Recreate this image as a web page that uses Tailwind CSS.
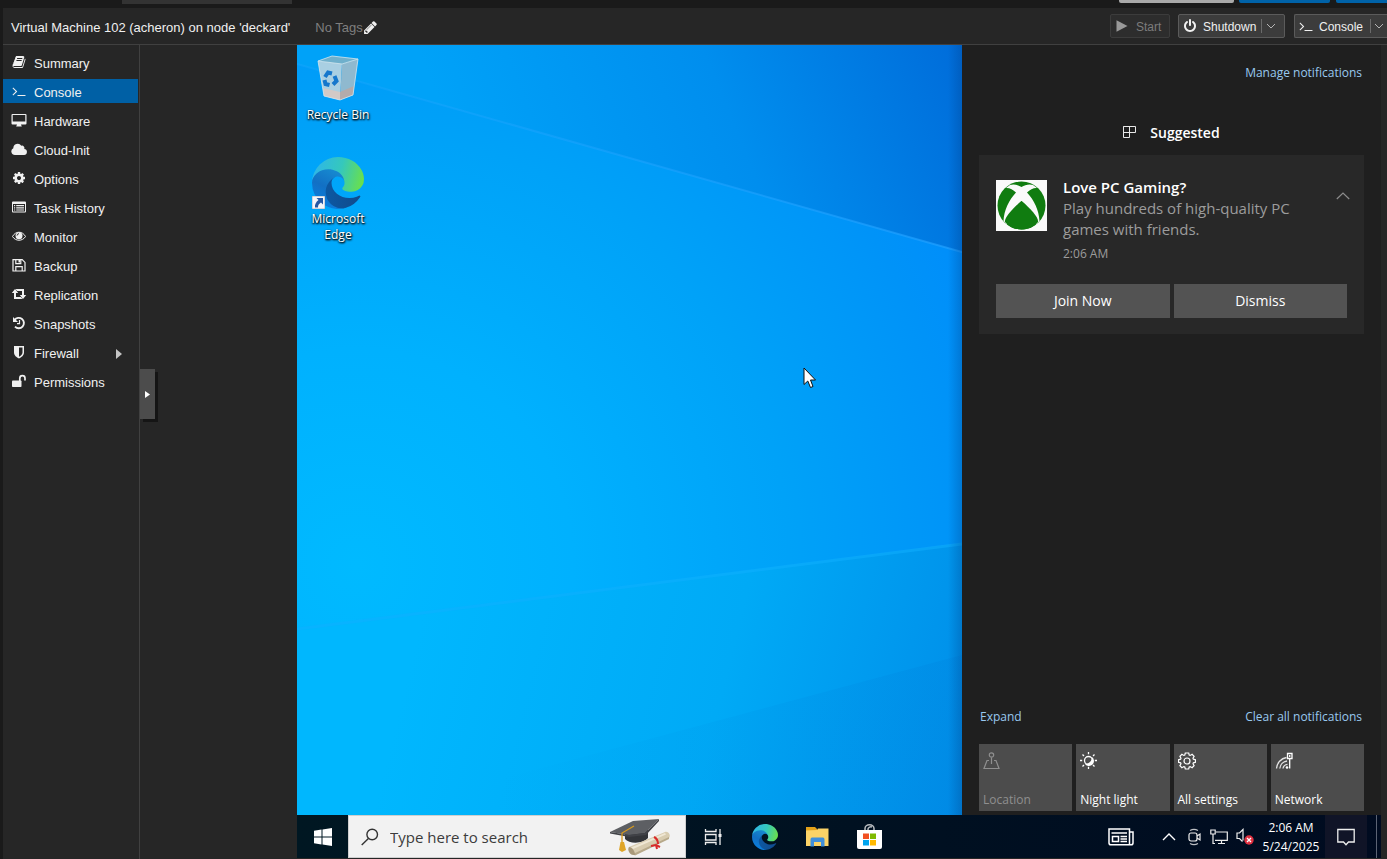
<!DOCTYPE html>
<html lang="en">
  <head>
    <meta charset="UTF-8" />
    <meta name="viewport" content="width=device-width, initial-scale=1.0" />
    <title>acheron - Virtual Environment</title>
    <script src="https://cdn.jsdelivr.net/npm/@tailwindcss/browser@4"></script>
  </head>

  <body
    class="flex h-screen flex-col overflow-hidden bg-[#1a1a1a] font-['Liberation_Sans',Arial,sans-serif] text-[13px] text-[#f0f0f0]"
  >
    <!-- Shared logo -->
    <svg class="absolute size-0" aria-hidden="true">
      <defs>
        <linearGradient id="edgeDark" x1="60" y1="177" x2="240" y2="177" gradientUnits="userSpaceOnUse">
          <stop offset="0" stop-color="#0c59a4" />
          <stop offset="1" stop-color="#114a8b" />
        </linearGradient>
        <linearGradient id="edgeMid" x1="120" y1="80" x2="45" y2="230" gradientUnits="userSpaceOnUse">
          <stop offset="0" stop-color="#1687cf" />
          <stop offset="0.5" stop-color="#1270c4" />
          <stop offset="1" stop-color="#0b7ddc" />
        </linearGradient>
        <linearGradient id="edgeTop" x1="20" y1="60" x2="250" y2="120" gradientUnits="userSpaceOnUse">
          <stop offset="0" stop-color="#2fb8e4" />
          <stop offset="0.5" stop-color="#35c8bc" />
          <stop offset="1" stop-color="#6ae04b" />
        </linearGradient>
        <symbol id="edge" viewBox="0 0 256 256">
          <path fill="url(#edgeDark)" d="M231.070 190.540a93.730 93.730 0 0 1-10.540 4.710 101.870 101.870 0 0 1-35.900 6.460c-47.320 0-88.540-32.550-88.540-74.320A31.480 31.480 0 0 1 112.520 100c-42.800 1.800-53.800 46.400-53.800 72.530 0 73.880 68.090 81.370 82.760 81.370 7.910 0 19.840-2.300 27-4.560l1.310-.44A128.340 128.340 0 0 0 236.370 197.620a4 4 0 0 0-5.300-7.080Z" />
          <path fill="url(#edgeMid)" d="M105.730 241.420A79.200 79.200 0 0 1 83 220.100 80.720 80.720 0 0 1 112.520 99.760c3.120-1.470 8.450-4.130 15.540-4A32.350 32.350 0 0 1 153.750 108.760a31.880 31.880 0 0 1 6.360 18.660c0-.21 24.460-79.600-80-79.600C36.200 47.820.11 89.490.11 126A130.190 130.190 0 0 0 12.110 182.030a128 128 0 0 0 156.380 67.110 75.550 75.550 0 0 1-62.780-8Z" />
          <path fill="url(#edgeTop)" d="M152.270 149.150c-.81 1.050-3.300 2.500-3.300 5.660 0 2.610 1.700 5.120 4.720 7.230 14.380 10 41.490 8.680 41.560 8.680a59.560 59.560 0 0 0 30.270-8.350A61.380 61.380 0 0 0 255.820 109.500c.26-22.410-8-37.310-11.340-43.910C223.290 24.140 177.550.29 127.800.29A128 128 0 0 0 0 126.490c.48-36.540 36.800-66.050 80-66.050 3.500 0 23.460.34 42 10.070 16.340 8.580 24.900 18.940 30.850 29.210 6.180 10.670 7.280 24.150 7.280 29.520S157.370 142.750 152.270 149.150Z" />
        </symbol>
        <symbol id="terminal" viewBox="0 0 1792 1792">
          <path fill="currentColor" d="M649 983l-466 466q-10 10-23 10t-23-10l-50-50q-10-10-10-23t10-23l393-393-393-393q-10-10-10-23t10-23l50-50q10-10 23-10t23 10l466 466q10 10 10 23t-10 23zm1079 457v64q0 14-9 23t-23 9h-960q-14 0-23-9t-9-23v-64q0-14 9-23t23-9h960q14 0 23 9t9 23z" />
        </symbol>
      </defs>
    </svg>

    <!-- Top edge of the page -->
    <div class="flex h-2 shrink-0 items-start">
      <div class="ml-[122px] h-1 w-[170px] bg-[#333]"></div>
      <div class="ml-auto h-[3px] w-[115px] rounded-b-xs bg-[#a9a9a9]"></div>
      <div class="ml-[5px] h-[3px] w-[91px] rounded-b-xs bg-[#0062a8]"></div>
      <div class="ml-[6px] h-[3px] w-[51px] rounded-bl-xs bg-[#0062a8]"></div>
    </div>

    <!-- VM toolbar -->
    <header class="ml-[3px] flex h-[37px] shrink-0 items-center border-b border-[#404040] bg-[#262626] pl-2">
      <h1 class="pt-[3px] whitespace-nowrap">Virtual Machine 102 (acheron) on node 'deckard'</h1>
      <div class="ml-[25px] flex items-center pt-[3px] text-[#7f7f7f]">
        <span>No Tags</span>
        <button class="text-[#f0f0f0]" aria-label="Edit tags">
          <svg class="size-[15px]" viewBox="0 0 1792 1792" fill="currentColor"><path d="M491 1536l91-91-235-235-91 91v107h128v128h107zm523-928q0-22-22-22-10 0-17 7l-542 542q-7 7-7 17 0 22 22 22 10 0 17-7l542-542q7-7 7-17zm-54-192l416 416-832 832h-416v-416zm683 96q0 53-37 90l-166 166-416-416 166-165q36-38 90-38 53 0 91 38l235 234q37 39 37 91z" /></svg>
        </button>
      </div>

      <div class="ml-auto flex text-xs">
        <button disabled class="flex h-6 w-[60px] items-center gap-2 rounded-xs border border-[#3c3c3c] bg-[#2d2d2d] pl-[5px] text-[#7c7c7c]">
          <svg class="size-3" viewBox="0 0 12 12" fill="#999"><path d="M0.500 0.300 11.500 6 0.500 11.700Z" /></svg>
          <span class="pt-px">Start</span>
        </button>
        <div class="ml-2 flex h-6 w-[107px] rounded-xs border border-[#5b5b5b] bg-[#3c3c3c]">
          <button class="flex items-center gap-[6px] pl-1">
            <svg class="size-[14px]" viewBox="0 0 1792 1792" fill="currentColor"><path d="M1664 896q0 156-61 298t-164 245-245 164-298 61-298-61-245-164-164-245-61-298q0-182 80.500-343t226.500-270q43-32 95.500-25t83.500 50q32 42 24.500 94.500t-49.500 84.500q-98 74-151.500 181t-53.500 228q0 104 40.500 198.500t109.500 163.500 163.500 109.500 198.500 40.500 198.500-40.500 163.500-109.500 109.500-163.500 40.500-198.500q0-121-53.500-228t-151.500-181q-42-32-49.500-84.500t24.500-94.500q31-43 84-50t95 25q146 109 226.500 270t80.500 343zm-640-768v640q0 52-38 90t-90 38-90-38-38-90v-640q0-52 38-90t90-38 90 38 38 90z" /></svg>
            <span class="pt-px">Shutdown</span>
          </button>
          <button class="my-1 mr-1 ml-auto flex w-[19px] items-center justify-center border-l border-[#6b6b6b]" aria-label="Shutdown options">
            <svg class="h-2 w-[10px]" viewBox="0 0 10 8" fill="none" stroke="#b5b5b5"><path d="M1 2l4 4 4-4" /></svg>
          </button>
        </div>
        <div class="ml-[9px] flex h-6 w-[93px] rounded-l-xs border-y border-l border-[#5b5b5b] bg-[#3c3c3c]">
          <button class="flex items-center gap-[6px] pl-1">
            <svg class="size-[14px]"><use href="#terminal" /></svg>
            <span class="pt-px">Console</span>
          </button>
          <button class="my-1 ml-auto flex w-[17px] items-center justify-center border-l border-[#6b6b6b]" aria-label="Console options">
            <svg class="h-2 w-[10px]" viewBox="0 0 10 8" fill="none" stroke="#b5b5b5"><path d="M1 2l4 4 4-4" /></svg>
          </button>
        </div>
      </div>
    </header>

    <div class="ml-[3px] flex min-h-0 flex-1 bg-[#262626]">
      <!-- Sidebar -->
      <nav class="flex w-[137px] shrink-0 flex-col gap-[5px] border-r border-[#404040] pt-[5px] pr-px">
        <a href="#" class="flex h-6 items-center gap-[7px] pt-1 pl-2">
          <svg class="mb-1 size-4 p-px" viewBox="0 0 1792 1792" fill="currentColor"><path d="M1703 478q40 57 18 129l-275 906q-19 64-76.500 107.500t-122.500 43.500h-923q-77 0-148.500-53.500t-99.500-131.500q-24-67-2-127 0-4 3-27t4-37q1-8-3-21.500t-3-19.500q2-11 8-21t16.500-23.500 16.500-23.500q23-38 45-91.500t30-91.500q3-10 .5-30t-.5-28q3-11 17-28t17-23q21-36 42-92t25-90q1-9-2.500-32t.5-28q4-13 22-30.500t22-22.500q19-26 42.500-84.500t27.500-96.500q1-8-3-25.500t-2-26.500q2-8 9-18t18-23 17-21q8-12 16.500-30.500t15-35 16-36 19.500-32 26.500-23.500 36-11.500 47.500 5.500l-1 3q38-9 51-9h761q74 0 114 56t18 130l-274 906q-36 119-71.500 153.500t-128.500 34.500h-869q-27 0-38 15-11 16-1 43 24 70 144 70h923q29 0 56-15.500t35-41.500l300-987q7-22 5-57 38 15 59 43zm-1064 2q-4 13 2 22.500t20 9.500h608q13 0 25.500-9.500t16.500-22.500l21-64q4-13-2-22.500t-20-9.500h-608q-13 0-25.500 9.500t-16.500 22.500zm-83 256q-4 13 2 22.500t20 9.500h608q13 0 25.500-9.500t16.500-22.500l21-64q4-13-2-22.500t-20-9.500h-608q-13 0-25.500 9.500t-16.500 22.500z" /></svg>
          Summary
        </a>
        <a href="#" class="flex h-6 items-center gap-[7px] bg-[#0060a5] pt-1 pl-2">
          <svg class="mb-1 size-4 p-px"><use href="#terminal" /></svg>
          Console
        </a>
        <a href="#" class="flex h-6 items-center gap-[7px] pt-1 pl-2">
          <svg class="mb-1 size-4" viewBox="0 0 16 16" fill="currentColor"><path fill-rule="evenodd" d="M1.500 2h13a1 1 0 0 1 1 1v8.500a1 1 0 0 1-1 1H10c0 1 .8 1.200.8 2H5.200c0-.8.8-1 .8-2H1.500a1 1 0 0 1-1-1V3a1 1 0 0 1 1-1ZM1.700 3.100v6.500h12.600V3.100Z" /></svg>
          Hardware
        </a>
        <a href="#" class="flex h-6 items-center gap-[7px] pt-1 pl-2">
          <svg class="mb-1 size-4" viewBox="0 0 16 16" fill="currentColor"><path d="M4 14A3.600 3.600 0 0 1 2.300 7.200 4.400 4.400 0 0 1 10.300 4.700 2.400 2.400 0 0 1 13.200 8 3 3 0 0 1 12.600 14Z" /></svg>
          Cloud-Init
        </a>
        <a href="#" class="flex h-6 items-center gap-[7px] pt-1 pl-2">
          <svg class="mb-1 size-4 p-px" viewBox="0 0 1792 1792" fill="currentColor"><path d="M1152 896q0-106-75-181t-181-75-181 75-75 181 75 181 181 75 181-75 75-181zm512-109v222q0 12-8 23t-20 13l-185 28q-19 54-39 91 35 50 107 138 10 12 10 25t-9 23q-27 37-99 108t-94 71q-12 0-26-9l-138-108q-44 23-91 38-16 136-29 186-7 28-36 28h-222q-14 0-24.500-8.500t-11.500-21.500l-28-184q-49-16-90-37l-141 107q-10 9-25 9-14 0-25-11-126-114-165-168-7-10-7-23 0-12 8-23 15-21 51-66.500t54-70.500q-27-50-41-99l-183-27q-13-2-21-12.500t-8-23.500v-222q0-12 8-23t19-13l186-28q14-46 39-92-40-57-107-138-10-12-10-24 0-10 9-23 26-36 98.500-107.500t94.500-71.500q13 0 26 10l138 107q44-23 91-38 16-136 29-186 7-28 36-28h222q14 0 24.500 8.500t11.500 21.500l28 184q49 16 90 37l142-107q9-9 24-9 13 0 25 10 129 119 165 170 7 8 7 22 0 12-8 23-15 21-51 66.500t-54 70.500q26 50 41 98l183 28q13 2 21 12.500t8 23.500z" /></svg>
          Options
        </a>
        <a href="#" class="flex h-6 items-center gap-[7px] pt-1 pl-2">
          <svg class="mb-1 size-4" viewBox="0 0 16 16" fill="currentColor"><path fill-rule="evenodd" d="M2 2.500h12a1 1 0 0 1 1 1v9a1 1 0 0 1-1 1H2a1 1 0 0 1-1-1v-9a1 1 0 0 1 1-1ZM2 5v7.500h12V5Z" /><path d="M3 6h1.200v1.200H3zM3 8.200h1.200v1.200H3zM3 10.400h1.200v1.200H3zM5.200 6H13v1.200H5.200zM5.200 8.200H13v1.200H5.200zM5.200 10.400H13v1.200H5.200z" /></svg>
          Task History
        </a>
        <a href="#" class="flex h-6 items-center gap-[7px] pt-1 pl-2">
          <svg class="mb-1 size-4" viewBox="0 0 16 16"><path fill="none" stroke="currentColor" d="M1.500 8.500C4.500 2.800 11.500 2.800 14.500 8.500 11.500 13.500 4.500 13.500 1.500 8.500Z" /><circle cx="8" cy="7.800" r="3.500" fill="currentColor" /><path d="M6 7.600A2.200 2.200 0 0 1 8 5.600" fill="none" stroke="#262626" stroke-width=".9" /></svg>
          Monitor
        </a>
        <a href="#" class="flex h-6 items-center gap-[7px] pt-1 pl-2">
          <svg class="mb-1 size-4" viewBox="0 0 16 16" fill="none" stroke="currentColor" stroke-width="1.200"><path d="M2 2.600h9.200L14 5.400V14H2ZM4.800 14V9.700h6.400V14M4.800 2.600v4h5v-4" /><path d="M8.300 3v2.500" stroke-width="1.600" /></svg>
          Backup
        </a>
        <a href="#" class="flex h-6 items-center gap-[7px] pt-1 pl-2">
          <svg class="mb-1 size-4" viewBox="0 0 16 16" fill="currentColor"><path d="M4 3 7.200 7H5v4h4.800l1.700 2H3V7H.8ZM12 13 8.800 9H11V5H6.200L4.500 3H13v6h2.200Z" /></svg>
          Replication
        </a>
        <a href="#" class="flex h-6 items-center gap-[7px] pt-1 pl-2">
          <svg class="mb-1 size-4" viewBox="0 0 16 16" fill="none" stroke="currentColor"><path stroke-width="1.900" d="M3.500 5A5.200 5.200 0 1 1 4 11.700" /><path fill="currentColor" stroke="none" d="M2 2v5h5Z" /><path stroke-width="1.200" d="M8.500 5v3.600H6" /></svg>
          Snapshots
        </a>
        <a href="#" class="flex h-6 items-center gap-[7px] pt-1 pl-2">
          <svg class="mb-1 size-4" viewBox="0 0 16 16" fill="currentColor"><path fill-rule="evenodd" d="M3 2h10v6.500c0 3-2.500 4.700-5 6-2.500-1.300-5-3-5-6ZM8 3.500v9.300c1.800-1 3.500-2.300 3.500-4.300v-5Z" /></svg>
          Firewall
          <svg class="mr-4 mb-px ml-auto h-[10px] w-[6px]" viewBox="0 0 6 10" fill="#c4c4c4"><path d="M0 0 6 5 0 10Z" /></svg>
        </a>
        <a href="#" class="flex h-6 items-center gap-[7px] pt-1 pl-2">
          <svg class="mb-1 size-4" viewBox="0 0 16 16"><rect x="1" y="7.500" width="9.500" height="6.500" rx=".8" fill="currentColor" /><path d="M8.800 8V5.300a2.600 2.600 0 0 1 5.200 0V7.500" fill="none" stroke="currentColor" stroke-width="1.700" /></svg>
          Permissions
        </a>
      </nav>

      <!-- Console -->
      <main class="relative flex min-w-0 flex-1 pr-[6px] pb-px pl-[157px]">
        <button
          class="absolute top-[324px] left-0 flex h-[50px] w-[15px] items-center justify-center bg-[#4c4c4c] shadow-[3px_3px_0_#151515]"
          aria-label="Show noVNC control bar"
        >
          <svg class="h-[7px] w-[5px]" viewBox="0 0 5 7" fill="#fff"><path d="M0 0 5 3.500 0 7Z" /></svg>
        </button>

        <div class="flex min-w-0 flex-1 flex-col font-['Open_Sans','Noto_Sans',sans-serif]">
          <div class="flex min-h-0 flex-1">
            <!-- Desktop -->
            <section class="relative min-w-0 flex-1 overflow-hidden bg-[#00a6f8]">
              <svg class="absolute inset-0 size-full" viewBox="0 0 665 770" preserveAspectRatio="none" aria-hidden="true">
                <defs>
                  <radialGradient id="mid" cx="60" cy="520" r="720" gradientUnits="userSpaceOnUse">
                    <stop offset="0" stop-color="#00baff" />
                    <stop offset="0.300" stop-color="#00b1fe" />
                    <stop offset="0.600" stop-color="#00a2f8" />
                    <stop offset="0.850" stop-color="#0093f8" />
                    <stop offset="1" stop-color="#008bfc" />
                  </radialGradient>
                  <linearGradient id="upper" x1="200" y1="200" x2="690" y2="0" gradientUnits="userSpaceOnUse">
                    <stop offset="0" stop-color="#00a2f8" />
                    <stop offset="0.500" stop-color="#008eee" />
                    <stop offset="1" stop-color="#0069d8" />
                  </linearGradient>
                  <linearGradient id="lower" x1="120" y1="590" x2="720" y2="740" gradientUnits="userSpaceOnUse">
                    <stop offset="0" stop-color="#00b7fe" />
                    <stop offset="0.500" stop-color="#00aaf6" />
                    <stop offset="1" stop-color="#0088e6" />
                  </linearGradient>
                  <linearGradient id="shade" x1="200" y1="0" x2="665" y2="0" gradientUnits="userSpaceOnUse">
                    <stop offset="0" stop-color="#0072d0" stop-opacity="0" />
                    <stop offset="1" stop-color="#0072d0" stop-opacity=".14" />
                  </linearGradient>
                  <linearGradient id="beam" x1="0" y1="0" x2="665" y2="0" gradientUnits="userSpaceOnUse">
                    <stop offset="0" stop-color="#22a8ff" stop-opacity=".3" />
                    <stop offset="1" stop-color="#22a0ff" stop-opacity=".7" />
                  </linearGradient>
                  <linearGradient id="edgeShadow" x1="651" y1="0" x2="665" y2="0" gradientUnits="userSpaceOnUse">
                    <stop offset="0" stop-color="#003a80" stop-opacity="0" />
                    <stop offset="1" stop-color="#003a80" stop-opacity=".3" />
                  </linearGradient>
                </defs>
                <path fill="url(#mid)" d="M0 0H665V770H0Z" />
                <path fill="url(#upper)" d="M0 0H665V207L0 19Z" />
                <path fill="url(#lower)" d="M0 583 665 498V770H0Z" />
                <path fill="url(#shade)" d="M200 735 665 610V770H200Z" />
                <path stroke="url(#beam)" stroke-width="2" d="M0 19 665 207" />
                <path stroke="#10b0ff" stroke-width="3" stroke-opacity=".5" d="M0 584 665 499" />
                <path fill="url(#edgeShadow)" d="M651 0H665V770H651Z" />
              </svg>

              <div class="relative flex w-[82px] flex-col text-center text-xs leading-4 font-medium text-white text-shadow-[1px_1px_2px_#000,0_1px_2px_#000]">
                <a href="#" class="flex h-[104px] flex-col items-center pt-2">
                  <svg class="h-[54px] w-12" viewBox="0 0 48 54">
                    <path fill="#a9cfe2" d="M4 8 28 10 26 47 10 43Z" />
                    <path fill="#8fb9cf" d="M28 11 44 6 39 42 26 47Z" />
                    <path fill="#6fb0cc" d="M4 8 18 3 44 6 28 11Z" />
                    <path fill="#d2c9c6" d="M9 35 26 39 26 47 10 43Z" />
                    <path fill="#b3abab" d="M26 39 40 33 39 42 26 47Z" />
                    <path fill="none" stroke="#d4e6ee" stroke-width=".8" d="M4 8 18 3 44 6 28 11ZM4 8 10 43 26 47 39 42 44 6" />
                    <g fill="none" stroke="#1577cc" stroke-width="4">
                      <path d="M11 24 14 19.500 18 20.500" />
                      <path d="M20.500 23 22.500 28 19 31.500" />
                      <path d="M15.500 32 11.500 31 10.500 27" />
                    </g>
                  </svg>
                  Recycle Bin
                </a>
                <a href="#" class="flex flex-col items-center pt-2">
                  <span class="relative block size-[52px]">
                    <svg class="size-[52px]"><use href="#edge" /></svg>
                    <svg class="absolute bottom-0 left-0 size-[13px]" viewBox="0 0 13 13"><path fill="#f4f6fa" stroke="#8d99a8" stroke-width=".7" d="M0 0H13V13H0Z" /><path fill="#2558a4" d="M4.500 2H11V8.500L9 6.500C6.500 8 6 9.500 6 11.500H3C2.500 8.500 4 6 6.500 4Z" /></svg>
                  </span>
                  <span class="mt-[2px]">Microsoft<br />Edge</span>
                </a>
              </div>

              <!-- Mouse pointer -->
              <svg class="absolute top-[322px] left-[506px] h-[22px] w-[14px]" viewBox="0 0 14 22"><path fill="#fff" stroke="#111" d="M1 1V17.500L4.800 14 7.500 20.500 10 19.500 7.500 13H12.500Z" /></svg>
            </section>

            <!-- Action center -->
            <aside class="flex w-[419px] shrink-0 flex-col bg-[#1f1f1f] px-[17px] pb-1">
              <a href="#" class="mt-[18px] self-end pr-[2px] text-xs leading-5 text-[#99c9ef]">Manage notifications</a>

              <h2 class="mt-10 flex items-center justify-center gap-[14px] text-sm leading-5 font-semibold text-white">
                <svg class="mb-[3px] size-[13px]" viewBox="0 0 13 13" fill="none" stroke="#e8e8e8"><path d="M.5 1.500H12.500V7.500H.5ZM.5 1.500V12.500H6.500V1.500" /></svg>
                Suggested
              </h2>

              <article class="mt-3 bg-[#282828] px-[17px] pt-[22px] pb-4">
                <div class="flex">
                  <svg class="mt-[3px] size-[51px] shrink-0" viewBox="0 0 51 51">
                    <path fill="#fafafa" d="M0 0H51V51H0Z" />
                    <circle cx="25.500" cy="25.500" r="24" fill="#107c10" />
                    <path fill="#fafafa" d="M14 5C18 3.500 22 5 25.500 7 29 5 33 3.500 37 5L41 8C38 7.500 34 9.500 31 12.500 38 20 43 30 43.500 41L40 45C39 37 33 27 25.500 21 18 27 12 37 11 45L7.500 41C8 30 13 20 20 12.500 17 9.500 13 7.500 10 8Z" />
                    <path fill="#107c10" d="M25.500 21C35 29 43 38 42 42 38 47 32 49.500 25.500 49.500 19 49.500 13 47 9 42 8 38 16 29 25.500 21Z" />
                  </svg>
                  <div class="ml-4 flex-1 text-[15px] leading-[21px] text-[#9c9c9c]">
                    <h3 class="font-semibold text-white">Love PC Gaming?</h3>
                    <p class="max-w-[250px]">Play hundreds of high-quality PC games with friends.</p>
                    <p class="mt-1 text-xs leading-5">2:06 AM</p>
                  </div>
                  <button class="mt-3 -mr-[3px] self-start p-0" aria-label="Collapse">
                    <svg class="h-[14px] w-[14px]" viewBox="0 0 14 14" fill="none" stroke="#8c8c8c" stroke-width="1.200"><path d="M.8 10 7 4 13.200 10" /></svg>
                  </button>
                </div>
                <div class="mt-5 grid grid-cols-2 gap-1 text-sm text-white">
                  <button class="h-[34px] bg-[#535353]">Join Now</button>
                  <button class="h-[34px] bg-[#535353]">Dismiss</button>
                </div>
              </article>

              <div class="mt-auto flex justify-between pr-[2px] pl-px text-xs leading-5 text-[#99c9ef]">
                <a href="#">Expand</a>
                <a href="#">Clear all notifications</a>
              </div>

              <div class="mt-[17px] grid grid-cols-4 gap-1 text-xs text-white">
                <button disabled class="flex h-[67px] flex-col items-start justify-between bg-[#4c4c4c] px-1 pt-2 pb-[3px] text-[#8f8f8f]">
                  <svg class="size-[18px]" viewBox="0 0 18 18" fill="none" stroke="currentColor" stroke-width="1.200"><circle cx="8.500" cy="3" r="2.200" /><path d="M8.500 5.500V12M6 8.500H4L1 16.500H16L13 8.500H11" /></svg>
                  Location
                </button>
                <button class="flex h-[67px] flex-col items-start justify-between bg-[#4c4c4c] px-1 pt-2 pb-[3px]">
                  <svg class="size-[18px]" viewBox="0 0 18 18" fill="none" stroke="currentColor" stroke-width="1.300"><circle cx="8.500" cy="8.500" r="4" /><path fill="currentColor" stroke="none" d="M12 5A5 5 0 1 1 5 12C9 12 12 9 12 5Z" /><path d="M8.500 0V2.200M8.500 14.800V17M0 8.500H2.200M14.800 8.500H17M2.500 2.500 4 4M13 13 14.500 14.500M2.500 14.500 4 13M13 4 14.500 2.500" /></svg>
                  Night light
                </button>
                <button class="flex h-[67px] flex-col items-start justify-between bg-[#4c4c4c] px-1 pt-2 pb-[3px]">
                  <svg class="size-[18px]" viewBox="0 0 18 18" fill="none" stroke="currentColor" stroke-width="1.200"><path d="M7.300 1h3.400l.5 2 1 .4 1.900-1.100 2 2-1.100 1.900.4 1 2 .5v2.600l-2 .5-.4 1 1.100 1.900-2 2-1.900-1.100-1 .4-.5 2H7.300l-.5-2-1-.4-1.900 1.100-2-2L3 11.800l-.4-1-2-.5V7.700l2-.5.4-1-1.100-1.900 2-2 1.900 1.100 1-.4Z" /><circle cx="9" cy="9" r="3" /></svg>
                  All settings
                </button>
                <button class="flex h-[67px] flex-col items-start justify-between bg-[#4c4c4c] px-1 pt-2 pb-[3px]">
                  <svg class="size-[18px]" viewBox="0 0 18 18" fill="none" stroke="currentColor" stroke-width="1.300"><path d="M1.500 16.500A12 12 0 0 1 11.500 5.500M4.800 16.500A8.500 8.500 0 0 1 12 9M8 16.500A5 5 0 0 1 12.500 12.300" stroke-opacity=".85" /><path d="M12.500 1.500H17V6.500H12.500ZM14.700 3V5M14.700 6.500V16.500" /><circle cx="12" cy="15.500" r="1.300" fill="currentColor" stroke="none" /></svg>
                  Network
                </button>
              </div>
            </aside>
          </div>

          <!-- Taskbar -->
          <footer class="flex h-[43px] shrink-0 items-stretch bg-gradient-to-r from-[#001722] to-[#000b20] text-white">
            <button class="flex w-[51px] items-center justify-center" aria-label="Start menu">
              <svg class="size-[18px]" viewBox="0 0 18 18" fill="#fff"><path d="M0 2.700 7.500 1.600V8.500H0ZM8.500 1.400 18 0V8.500H8.500ZM0 9.500H7.500V16.400L0 15.300ZM8.500 9.500H18V18L8.500 16.600Z" /></svg>
            </button>
            <label class="flex w-[338px] items-center border border-[#cfcfcf] bg-[#f2f2f2] pl-3">
              <svg class="size-[18px] shrink-0" viewBox="0 0 18 18" fill="none" stroke="#333" stroke-width="1.400"><circle cx="11.200" cy="6.500" r="5.300" /><path d="M7.400 10.400.7 17" /></svg>
              <input type="text" placeholder="Type here to search" aria-label="Search" class="ml-[11px] w-0 flex-1 bg-transparent pt-px text-[15px] text-[#3c3c3c] outline-none placeholder:text-[#3c3c3c]" />
              <svg class="mr-[14px] h-[38px] w-[62px] shrink-0" viewBox="0 0 62 38">
                <path fill="#333539" d="M16 14V21C20 26 34 26 39 20V11Z" />
                <path fill="#5d5f63" d="M1 14 24 3 50 1 36 15 20 17Z" />
                <path fill="#404247" d="M1 14 20 17 36 15 50 1 50 3 37 17 20 19 1 15.500Z" />
                <path fill="none" stroke="#d79a1e" stroke-width="1.300" d="M25 8 13 15V26" />
                <path fill="#dfa528" d="M11.500 24H15L17 32 13 34 10 32Z" />
                <path fill="#d8ccb0" d="M20 29 56 14C60 13 62 18 60 20L26 37C21 38 18 32 20 29Z" />
                <path fill="#b7a98a" d="M24 36 60 19 60 21 26 37.500Z" />
                <path fill="#efe7d4" d="M22 29.500 56 15 57 16.500 24 31Z" />
                <path fill="#a9997a" d="M20 29C23 29 26 33 26 37 21 38 18 32 20 29Z" />
                <path fill="none" stroke="#d92a2a" stroke-width="2" d="M45 19Q49 21 49 26M42 28 47 27 51 29M47 27 48 31" />
              </svg>
            </label>
            <button class="ml-px flex w-[51px] items-center justify-center" aria-label="Task view">
              <svg class="size-[18px]" viewBox="0 0 18 18" fill="none" stroke="#eee" stroke-width="1.300"><path d="M1.500 1V3.500H12V1M1.500 6.500H12V12H1.500ZM1.500 17V14.500H12V17M16 1V17" /><path d="M14.500 7.500H17.500" stroke-width="3" /></svg>
            </button>
            <button class="ml-px flex w-[52px] items-center justify-center" aria-label="Microsoft Edge">
              <svg class="size-[26px]"><use href="#edge" /></svg>
            </button>
            <button class="flex w-[52px] items-center justify-center" aria-label="File Explorer">
              <svg class="h-5 w-[23px]" viewBox="0 0 23 20"><path fill="#e3a21a" d="M0 0H9L11 2V4H0Z" /><path fill="#fbd367" d="M0 3.500 11 3 12 1.500H22.500V19H0Z" /><path fill="#3f8fdb" d="M4.500 19.500V12.500C4.500 11 5.500 10.500 6.500 10.500H16.500C17.500 10.500 18.500 11 18.500 12.500V19.500H15V15H8V19.500Z" /></svg>
            </button>
            <button class="flex w-[52px] items-center justify-center" aria-label="Microsoft Store">
              <svg class="h-[25px] w-[25px]" viewBox="0 0 25 25"><path fill="none" stroke="#b8bcc0" stroke-width="1.500" d="M8 6V4.500A4.500 3.700 0 0 1 17 4.500V6M11 6V5A3 3 0 0 1 15 3" /><path fill="#fff" d="M0 6H25V23Q25 25 23 25H2Q0 25 0 23Z" /><path fill="#f25022" d="M6 9.500H12V15H6Z" /><path fill="#7fba00" d="M13 9.500H19V15H13Z" /><path fill="#00a4ef" d="M6 16H12V21.500H6Z" /><path fill="#ffb900" d="M13 16H19V21.500H13Z" /></svg>
            </button>

            <div class="ml-auto flex items-center">
              <button class="mr-7" aria-label="News">
                <svg class="h-[18px] w-[26px]" viewBox="0 0 26 18" fill="none" stroke="#fff" stroke-width="1.500"><path d="M1 1H21.500V16.800H3Q1 16.800 1 15ZM21.500 4H25V15Q25 16.800 23 16.800H19" /><path d="M3.500 5H19" /><path d="M4.500 8.500H10.500V13.500H4.500ZM12.500 8.500H19M12.500 11H19M12.500 13.500H19" /></svg>
              </button>
              <button class="mr-3" aria-label="Show hidden icons">
                <svg class="h-[10px] w-[14px]" viewBox="0 0 14 10" fill="none" stroke="#fff" stroke-width="1.400"><path d="M1 8 7 2 13 8" /></svg>
              </button>
              <button class="mr-[9px]" aria-label="Meet now">
                <svg class="h-[18px] w-[13px]" viewBox="0 0 13 18" fill="none" stroke="#eee" stroke-width="1.200"><path d="M2 2.500Q6 .3 10 2.500M2 15.500Q6 17.700 10 15.500" stroke-opacity=".8" /><rect x="1" y="5" width="8" height="8" rx="2" /><path d="M9 8 12 6V12L9 10" /></svg>
              </button>
              <button class="mr-2" aria-label="Network status">
                <svg class="h-[16px] w-[18px]" viewBox="0 0 18 16" fill="none" stroke="#eee" stroke-width="1.200"><path d="M6 3H17.300V11.300H5M11.500 11.500V14.500M8 14.500H15M.8 1H5.200V5H.8ZM3 5V14.500H5" /></svg>
              </button>
              <button class="mr-[6px]" aria-label="Volume muted">
                <svg class="h-[17px] w-[18px]" viewBox="0 0 18 17"><path fill="none" stroke="#eee" stroke-width="1.200" d="M7 12.500V1.500L3.500 5H1V10.500H3.500L6.500 13.500" /><circle cx="13" cy="12" r="4.700" fill="#e03040" /><path stroke="#fff" stroke-width="1.300" d="M11 10 15 14M15 10 11 14" /></svg>
              </button>
              <div class="w-[62px] text-center text-xs leading-[19px] whitespace-nowrap">2:06 AM<br />5/24/2025</div>
              <button class="ml-[3px] flex h-[43px] w-[42px] items-center justify-center bg-[#101427]" aria-label="Notifications">
                <svg class="size-[18px]" viewBox="0 0 18 18" fill="none" stroke="#eee" stroke-width="1.300"><path d="M.8 1.500H17.200V14H11.500L9 16.800 6.500 14H.8Z" /></svg>
              </button>
              <div class="mr-1 ml-[9px] h-[43px] w-px bg-[#5c6374]"></div>
            </div>
          </footer>
        </div>
      </main>
    </div>
  </body>
</html>
